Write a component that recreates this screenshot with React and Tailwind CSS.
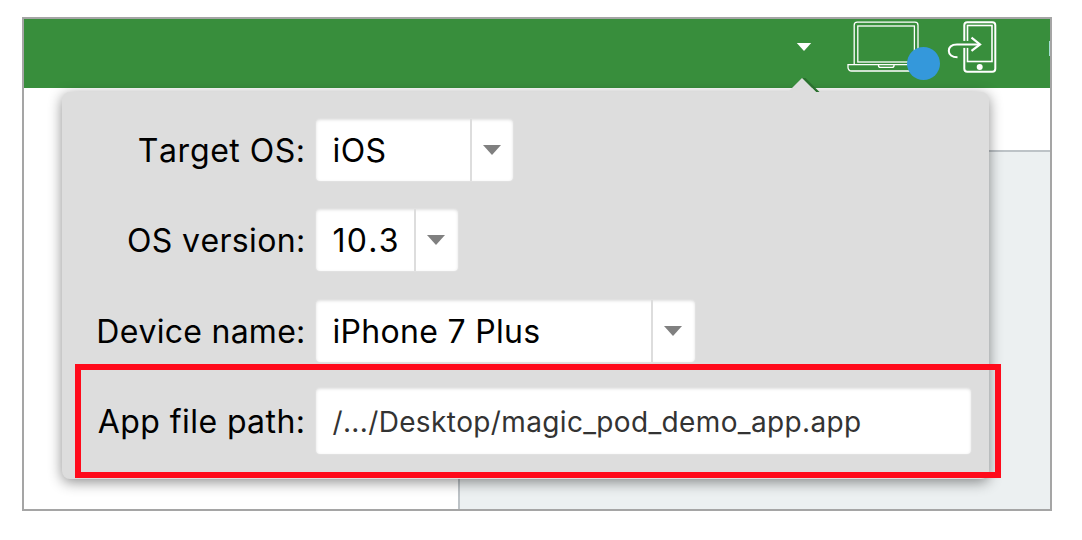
function Caret({ className }) {
  return (
    <svg viewBox="0 0 18 10" className={className} aria-hidden="true">
      <path d="M0 0H18L9 10Z" fill="currentColor" />
    </svg>
  );
}

function LaptopIcon() {
  return (
    <svg width="76" height="52" viewBox="0 0 76 52" fill="none" stroke="#fff" strokeWidth="1.3" aria-hidden="true">
      <path d="M7.2 43V4.2a3 3 0 0 1 3-3H68a3 3 0 0 1 3 3V43" />
      <rect x="10.8" y="5" width="56.6" height="36" />
      <path d="M1 43.7H76V46.5a3.5 3.5 0 0 1-3.5 3.5H4.5A3.5 3.5 0 0 1 1 46.500Z" />
      <path d="M31.500 44v.4a2 2 0 0 0 2 2H45a2 2 0 0 0 2-2V44" />
    </svg>
  );
}

function PhoneIcon() {
  return (
    <svg width="50" height="54" viewBox="0 0 50 54" fill="none" stroke="#fff" aria-hidden="true">
      <rect x="17.300" y="2.200" width="31" height="49.600" rx="3" strokeWidth="2" />
      <rect x="20.500" y="5.500" width="24.500" height="36" strokeWidth="1.600" />
      <path d="M15 24.400H28" stroke="#388e3c" strokeWidth="7" />
      <path d="M10.500 37.300C5 37.300 1.800 34.500 1.800 31C1.800 26.500 5 24.400 10 24.400H33" strokeWidth="2" />
      <path d="M24.500 17.700L33 24.400L24.500 30.800" strokeWidth="2.200" />
      <circle cx="32.700" cy="47" r="3" fill="#fff" stroke="none" />
    </svg>
  );
}

function Toolbar() {
  return (
    <header className="flex h-[69px] shrink-0 items-start overflow-hidden bg-[#388e3c] pl-[772px] text-white">
      <Caret className="mt-[24px] h-[8px] w-[16px]" />
      <div className="relative ml-[35px] mt-[2px] h-[52px] w-[76px]">
        <LaptopIcon />
        <span className="absolute left-[60px] top-[26px] h-[33px] w-[33px] rounded-full bg-[#3498db]" />
      </div>
      <div className="ml-[24px] mt-px">
        <PhoneIcon />
      </div>
      <span className="ml-[52px] mt-[22px] h-[15px] w-px shrink-0 bg-[#a5dfd3]" />
    </header>
  );
}

const inset = "shadow-[inset_0_1px_3px_rgba(0,0,0,0.13),0_0_0_1px_rgba(255,255,255,0.12)]";

function Select({ value, width, spacing }) {
  return (
    <div className={`flex h-[62px] overflow-hidden rounded-[4px] bg-white ${inset} ${width}`}>
      <div className={`flex flex-1 items-center whitespace-nowrap pl-[17px] pt-[2px] ${spacing}`}>{value}</div>
      <div className="flex w-[43.5px] items-center border-l-2 border-[#dddddd] pl-[11px] text-[#808080]">
        <Caret className="h-[10px] w-[18px]" />
      </div>
    </div>
  );
}

function Row({ label, spacing, className, children }) {
  return (
    <div className={`flex items-center ${className}`}>
      <div className="flex w-[253.5px] shrink-0 justify-end whitespace-nowrap pr-[10px] pt-[2px]">
        <span className={spacing}>{label}</span>
      </div>
      {children}
    </div>
  );
}

function SettingsPopover() {
  return (
    <section className="absolute left-[38px] top-[73px] h-[387px] w-[927px] rounded-[8px] bg-[#dddddd] pt-[27px] text-[32px] leading-[40px] text-black shadow-[0_3px_14px_rgba(0,0,0,0.45)] [font-kerning:none]">
      <svg width="36" height="15" viewBox="0 0 36 15" className="absolute left-[725px] top-[-14px]" aria-hidden="true">
        <path d="M15 0L18.500 0L32.500 14H29Z" fill="#2b702f" />
        <path d="M15 0L30 15H0Z" fill="#dddddd" />
      </svg>
      <Row label="Target OS:" spacing="tracking-[0.5px]" className="h-[62px]">
        <Select value="iOS" width="w-[197.5px]" spacing="tracking-[0.4px]" />
      </Row>
      <Row label="OS version:" spacing="tracking-[0.35px]" className="mt-[28px] h-[62px]">
        <Select value="10.3" width="w-[142px]" spacing="tracking-[1.3px]" />
      </Row>
      <Row label="Device name:" spacing="tracking-[0.25px]" className="mt-[29px] h-[62px]">
        <Select value="iPhone 7 Plus" width="w-[379px]" spacing="tracking-[0.3px]" />
      </Row>
      <Row label="App file path:" spacing="tracking-[0.45px]" className="mt-[26px] h-[66px]">
        <div className={`flex h-[66px] w-[655px] items-center rounded-[4px] bg-white pl-[17px] pt-px text-[28px] text-[#333333] ${inset}`}>
          <span className="tracking-[0.35px]">/.../Desktop/magic_pod_demo_app.app</span>
        </div>
      </Row>
    </section>
  );
}

export default function App() {
  return (
    <div className="h-[540px] w-[1082px] overflow-hidden bg-white pl-[22px] pt-[17px] font-['Inter',sans-serif]">
      <main className="relative flex h-[494px] w-[1030px] flex-col overflow-hidden border-2 border-[#a5a5a5] bg-white">
        <Toolbar />
        <div className="h-[62px] shrink-0" />
        <div className="flex flex-1">
          <div className="w-[434px]" />
          <div className="flex-1 border-l-2 border-t-2 border-[#bdc3c7] bg-[#ecf0f1]" />
        </div>
        <SettingsPopover />
        <div className="absolute left-[51px] top-[345px] h-[114px] w-[926px] border-6 border-[#ff0a1b]" />
      </main>
    </div>
  );
}
